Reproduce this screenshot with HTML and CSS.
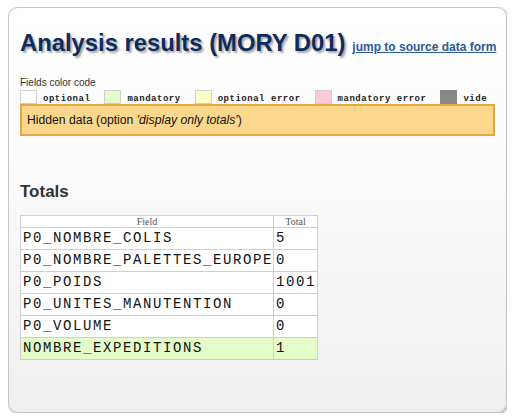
FILE: index.html
```html
<!DOCTYPE html>
<html>
<head>
<meta charset="utf-8">
<link rel="stylesheet" href="styles.css">
</head>
<body>
<div class="panel">
  <div class="head">
    <h1 class="title">Analysis results (MORY D01)</h1>
    <a class="jump" href="#">jump to source data form</a>
  </div>
  <div class="legend-title">Fields color code</div>
  <div class="legend">
    <span class="sw sw-opt"></span><span class="lab">optional</span>
    <span class="sw sw-man"></span><span class="lab">mandatory</span>
    <span class="sw sw-opterr"></span><span class="lab">optional error</span>
    <span class="sw sw-manerr"></span><span class="lab">mandatory error</span>
    <span class="sw sw-vide"></span><span class="lab">vide</span>
  </div>
  <div class="hidden">Hidden data (option <i>'display only totals'</i>)</div>
  <h2 class="totals">Totals</h2>
  <table class="tbl">
    <tr class="hdr"><th>Field</th><th>Total</th></tr>
    <tr><td>P0_NOMBRE_COLIS</td><td>5</td></tr>
    <tr><td>P0_NOMBRE_PALETTES_EUROPE</td><td>0</td></tr>
    <tr><td>P0_POIDS</td><td>1001</td></tr>
    <tr><td>P0_UNITES_MANUTENTION</td><td>0</td></tr>
    <tr><td>P0_VOLUME</td><td>0</td></tr>
    <tr class="mand"><td>NOMBRE_EXPEDITIONS</td><td>1</td></tr>
  </table>
</div>
</body>
</html>
```
FILE: styles.css
```css
html { background: #ffffff; }
body {
  margin: 7px 9px 6px 8px;
  font-family: "Liberation Sans", Arial, sans-serif;
  background: transparent;
}
.panel {
  box-sizing: border-box;
  height: 406px;
  border: 1px solid #c4c4c4;
  border-radius: 10px;
  box-shadow: 1px 1px 3px rgba(0,0,0,0.35);
  background: linear-gradient(#ffffff 0%, #fbfbfb 40%, #efefef 100%);
  padding: 0 11px;
}
.head {
  display: flex;
  align-items: baseline;
  gap: 7px;
  padding-top: 21px;
  white-space: nowrap;
}
.title {
  margin: 0;
  flex-shrink: 0;
  font-size: 23.8px;
  font-weight: bold;
  line-height: 28px;
  color: #0e2c5e;
  text-shadow: 2px 2px 2px rgba(0,0,0,0.35);
}
.jump {
  flex-shrink: 0;
  font-size: 12px;
  font-weight: bold;
  color: #2b5896;
  text-decoration: underline;
}
.legend-title {
  margin-top: 20px;
  font-size: 10px;
  line-height: 12px;
  color: #333;
}
.legend {
  display: flex;
  align-items: center;
  margin-top: 1px;
  height: 14px;
  white-space: nowrap;
}
.sw {
  box-sizing: border-box;
  flex-shrink: 0;
  width: 17px;
  height: 14px;
  border: 1px solid #cfcfcf;
  margin-right: 6px;
}
.lab {
  flex-shrink: 0;
  font-family: "Liberation Mono", "Courier New", monospace;
  font-size: 9px;
  font-weight: bold;
  letter-spacing: 0.52px;
  color: #222;
  margin-right: 14px;
  line-height: 14px;
  padding-top: 3px;
}
.sw-opt { background: #ffffff; }
.sw-man { background: #e4fccc; }
.sw-opterr { background: #fefec8; }
.sw-manerr { background: #fcc8dc; }
.sw-vide { background: #888888; border-color: #888; }
.hidden {
  box-sizing: border-box;
  height: 32px;
  background: #fdd78c;
  border: 2px solid #e6a640;
  padding: 0 0 0 5px;
  font-size: 12.2px;
  line-height: 29px;
  color: #111;
}
.totals {
  margin: 46px 0 0 0;
  font-size: 17px;
  line-height: 20px;
  font-weight: bold;
  color: #333;
}
.tbl {
  margin-top: 13px;
  border-collapse: collapse;
  background: #fff;
}
.tbl th {
  font-family: "Liberation Serif", "Times New Roman", serif;
  font-weight: normal;
  font-size: 10px;
  line-height: 11px;
  color: #555;
  border: 1px solid #cfcfcf;
  padding: 0 2px;
  text-align: center;
}
.tbl td {
  font-family: "Liberation Mono", "Courier New", monospace;
  font-size: 14px;
  letter-spacing: 1.6px;
  height: 21px;
  line-height: 21px;
  padding: 0 0 0 2px;
  border: 1px solid #cfcfcf;
  color: #111;
  white-space: nowrap;
}
.tbl td + td { padding-right: 1px; }
.tbl .mand td { background: #e4fcc8; }
```
